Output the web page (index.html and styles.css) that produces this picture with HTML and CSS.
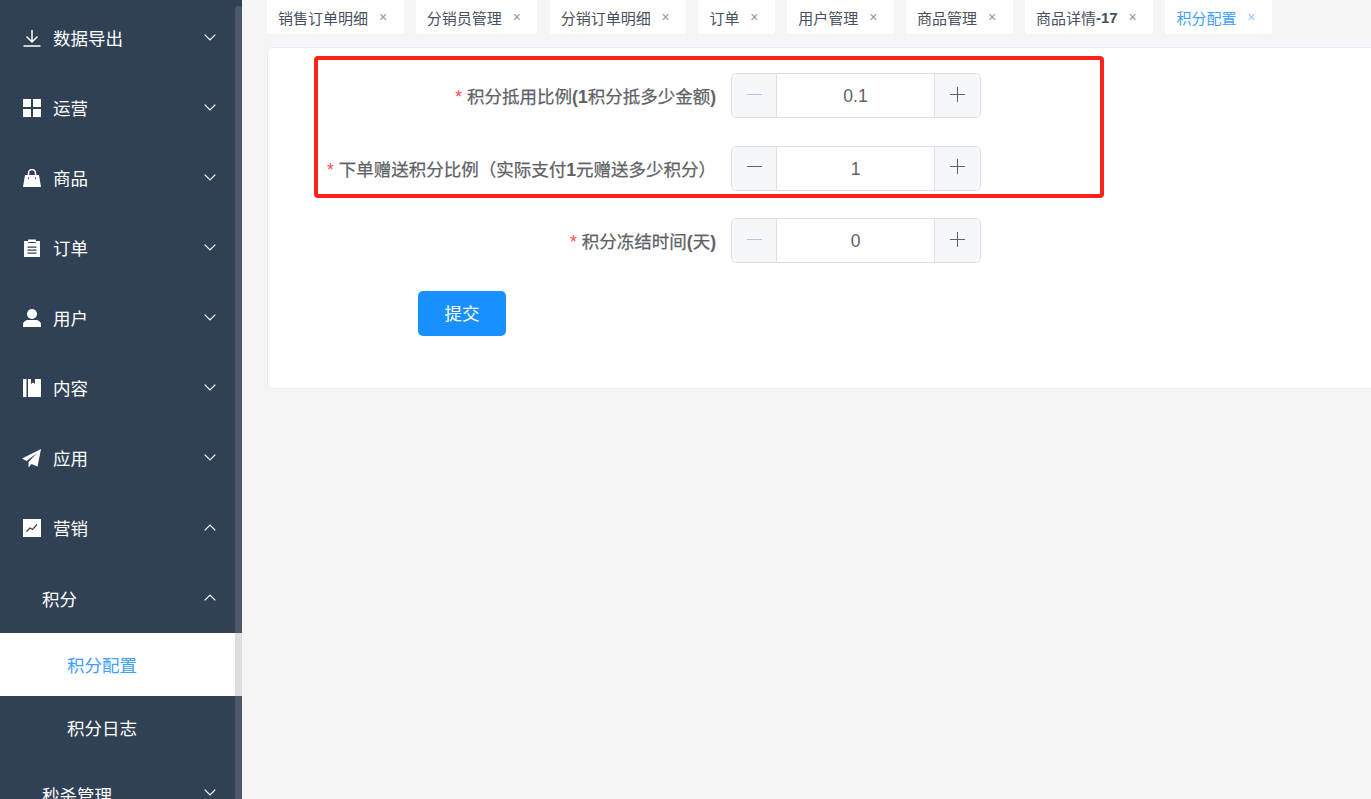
FILE: index.html
```html
<!DOCTYPE html>
<html lang="zh-CN">
<head>
<meta charset="utf-8">
<title>积分配置</title>
<link rel="stylesheet" href="styles.css">
</head>
<body>
<div class="app">
  <aside class="sidebar">
    <nav class="menu">
      <div class="row"><svg class="ico" viewBox="0 0 18 18"><path d="M9 1v12M3.500 7.500L9 13l5.500-5.500M.5 17h17" fill="none" stroke="#fff" stroke-width="1.500"/></svg><span class="label">数据导出</span><svg class="chev" viewBox="0 0 12 7"><path d="M.7.7L6 6l5.300-5.300" fill="none" stroke="#fff" stroke-width="1.200"/></svg></div>
      <div class="row"><svg class="ico" viewBox="0 0 18 18"><path d="M0 0h8v8H0zM10 0h8v8h-8zM0 10h8v8H0zM10 10h8v8h-8z" fill="#fff"/></svg><span class="label">运营</span><svg class="chev" viewBox="0 0 12 7"><path d="M.7.7L6 6l5.300-5.300" fill="none" stroke="#fff" stroke-width="1.200"/></svg></div>
      <div class="row"><svg class="ico" viewBox="0 0 18 18"><path d="M2 6h14l2 12H0z" fill="#fff"/><path d="M5.500 7V4a3.500 3.500 0 0 1 7 0v3" fill="none" stroke="#fff" stroke-width="1.500"/><path d="M5 8.500h1v1.500H5zM12 8.500h1v1.500h-1z" fill="#304156"/></svg><span class="label">商品</span><svg class="chev" viewBox="0 0 12 7"><path d="M.7.7L6 6l5.300-5.300" fill="none" stroke="#fff" stroke-width="1.200"/></svg></div>
      <div class="row"><svg class="ico" viewBox="0 0 18 18"><path d="M1 2h4V.5h8V2h4v16H1z" fill="#fff"/><path d="M4.500 7.500h9v1.200h-9zM4.500 10.500h9v1.200h-9zM4.500 13.500h9v1.200h-9zM5.500 3h7v1h-7z" fill="#304156"/></svg><span class="label">订单</span><svg class="chev" viewBox="0 0 12 7"><path d="M.7.7L6 6l5.300-5.300" fill="none" stroke="#fff" stroke-width="1.200"/></svg></div>
      <div class="row"><svg class="ico" viewBox="0 0 18 18"><circle cx="9" cy="5" r="5" fill="#fff"/><path d="M0 18v-2.500C0 12.500 3 11 5.500 11h7c2.500 0 5.500 1.500 5.500 4.500V18z" fill="#fff"/></svg><span class="label">用户</span><svg class="chev" viewBox="0 0 12 7"><path d="M.7.7L6 6l5.300-5.300" fill="none" stroke="#fff" stroke-width="1.200"/></svg></div>
      <div class="row"><svg class="ico" viewBox="0 0 18 18"><path d="M0 0h3.500v18H0zM5 0h3v5l2-1.500L12 5V0h6v18H5z" fill="#fff"/></svg><span class="label">内容</span><svg class="chev" viewBox="0 0 12 7"><path d="M.7.7L6 6l5.300-5.300" fill="none" stroke="#fff" stroke-width="1.200"/></svg></div>
      <div class="row"><svg class="ico ico-plane" viewBox="0 0 19 19"><path d="M19 0L0 9.500l4.500 2.500L15 4 6.500 13v5.500l3-3.500 6 2.500z" fill="#fff"/></svg><span class="label">应用</span><svg class="chev" viewBox="0 0 12 7"><path d="M.7.7L6 6l5.300-5.300" fill="none" stroke="#fff" stroke-width="1.200"/></svg></div>
      <div class="row"><svg class="ico" viewBox="0 0 18 18"><path d="M0 0h18v18H0z" fill="#fff"/><path d="M3.500 12.500l3.500-3.500 2.500 1.500 4.500-5" fill="none" stroke="#304156" stroke-width="1.200"/></svg><span class="label">营销</span><svg class="chev" viewBox="0 0 12 7"><path d="M.7 6.300L6 1l5.300 5.300" fill="none" stroke="#fff" stroke-width="1.200"/></svg></div>
      <div class="row row-sub"><span class="label">积分</span><svg class="chev" viewBox="0 0 12 7"><path d="M.7 6.300L6 1l5.300 5.300" fill="none" stroke="#fff" stroke-width="1.200"/></svg></div>
      <div class="leaf is-active">积分配置</div>
      <div class="leaf">积分日志</div>
      <div class="row row-sub"><span class="label">秒杀管理</span><svg class="chev" viewBox="0 0 12 7"><path d="M.7.7L6 6l5.300-5.300" fill="none" stroke="#fff" stroke-width="1.200"/></svg></div>
    </nav>
    <div class="scrollbar"></div>
  </aside>
  <main class="main">
    <div class="tabs">
      <div class="tab">销售订单明细<span class="x">×</span></div>
      <div class="tab">分销员管理<span class="x">×</span></div>
      <div class="tab">分销订单明细<span class="x">×</span></div>
      <div class="tab">订单<span class="x">×</span></div>
      <div class="tab">用户管理<span class="x">×</span></div>
      <div class="tab">商品管理<span class="x">×</span></div>
      <div class="tab">商品详情<b>-17</b><span class="x">×</span></div>
      <div class="tab is-active">积分配置<span class="x">×</span></div>
    </div>
    <section class="card">
      <form class="form">
        <div class="item"><label class="item-label"><i>*</i>积分抵用比例<b>(1</b>积分抵多少金额<b>)</b></label>
          <div class="num"><span class="step off"><svg viewBox="0 0 15 15"><path d="M0 7.500h15"/></svg></span><span class="val">0.1</span><span class="step"><svg viewBox="0 0 15 15"><path d="M0 7.500h15M7.500 0v15"/></svg></span></div></div>
        <div class="item"><label class="item-label"><i>*</i>下单赠送积分比例（实际支付<b>1</b>元赠送多少积分）</label>
          <div class="num"><span class="step"><svg viewBox="0 0 15 15"><path d="M0 7.500h15"/></svg></span><span class="val">1</span><span class="step"><svg viewBox="0 0 15 15"><path d="M0 7.500h15M7.500 0v15"/></svg></span></div></div>
        <div class="item"><label class="item-label"><i>*</i>积分冻结时间<b>(</b>天<b>)</b></label>
          <div class="num"><span class="step off"><svg viewBox="0 0 15 15"><path d="M0 7.500h15"/></svg></span><span class="val">0</span><span class="step"><svg viewBox="0 0 15 15"><path d="M0 7.500h15M7.500 0v15"/></svg></span></div></div>
        <button class="submit" type="button">提交</button>
      </form>
    </section>
    <div class="annotation"></div>
  </main>
</div>
</body>
</html>
```

FILE: styles.css
```css
* { box-sizing: border-box; }
html, body { margin: 0; height: 100%; overflow: hidden; }
body {
  font-family: "Liberation Sans", "Noto Sans CJK SC", sans-serif;
  background: #f5f5f5;
  color: #606266;
}
.app { display: flex; height: 799px; width: 1371px; overflow: hidden; }

/* sidebar */
.sidebar {
  position: relative;
  flex: 0 0 242px;
  background: #304156;
  overflow: hidden;
  color: #fff;
  font-size: 17.5px;
}
.menu { padding-top: 4px; }
.row {
  display: flex;
  align-items: center;
  height: 70px;
  padding: 0 26px 0 23px;
}
.row-sub { padding-left: 42px; height: 69px; }
.row-sub:last-child { height: 70px; }
.ico { width: 18px; height: 18px; flex: none; margin-right: 12px; margin-bottom: 2px; }
.ico-plane { width: 19px; height: 19px; margin-left: -1px; }
.label { flex: 1; margin-bottom: 3px; }
.row-sub .label { margin-bottom: 0; }
.chev { width: 12px; height: 7px; flex: none; margin-bottom: 3px; }
.leaf {
  display: flex;
  align-items: center;
  height: 63px;
  padding-left: 67px;
}
.leaf.is-active { background: #fff; color: #409eff; }
.scrollbar {
  position: absolute;
  top: 6px;
  right: 0;
  bottom: 0;
  width: 7px;
  border-radius: 4px 4px 0 0;
  background: rgba(144, 147, 153, .3);
}

/* main */
.main {
  position: relative;
  flex: 1;
  min-width: 0;
  padding-left: 25px;
  overflow: hidden;
}
.tabs { display: flex; gap: 12.3px; height: 34px; }
.tab {
  display: flex;
  align-items: center;
  flex: none;
  height: 34px;
  padding: 0 16px 0 11px;
  background: #fff;
  border-radius: 0 0 3px 3px;
  font-size: 15px;
  white-space: nowrap;
  color: #495060;
}
.tab b { font-weight: 700; }
.tab .x {
  display: block;
  width: 9px;
  margin-left: 10.5px;
  font-size: 14px;
  line-height: 14px;
  text-align: center;
  color: #495060;
  opacity: .6;
}
.tab.is-active, .tab.is-active .x { color: #409eff; }

.card {
  width: 1200px;
  margin-top: 13px;
  padding: 25px 0 52px;
  background: #fff;
  border: 1px solid #e6ebf5;
  border-radius: 5px;
}
.item { display: flex; align-items: center; margin-bottom: 27.5px; }
.item-label {
  flex: 0 0 463px;
  padding-right: 15px;
  text-align: right;
  font-size: 17.5px;
  white-space: nowrap;
  color: #606266;
  -webkit-text-stroke: .25px #606266;
}
.item-label b { -webkit-text-stroke: 0; }
.item-label i {
  font-style: normal;
  color: #ff4949;
  margin-right: 5px;
  -webkit-text-stroke: 0;
}
.num {
  display: flex;
  width: 250px;
  height: 45px;
  border: 1px solid #dcdfe6;
  border-radius: 5px;
  overflow: hidden;
}
.step {
  display: flex;
  align-items: center;
  justify-content: center;
  flex: 0 0 45px;
  padding-bottom: 3px;
  background: #f5f7fa;
}
.step:first-child { border-right: 1px solid #dcdfe6; }
.step:last-child { flex-basis: 46px; border-left: 1px solid #dcdfe6; }
.step svg { width: 15px; height: 15px; fill: none; stroke: #606266; stroke-width: 1; }
.step.off svg { stroke: #c0c4cc; }
.val {
  flex: 1;
  line-height: 45px;
  text-align: center;
  font-size: 17.5px;
  color: #606266;
}
.submit {
  display: block;
  width: 88px;
  height: 45px;
  margin-left: 150px;
  padding: 0 0 2px;
  border: 0;
  border-radius: 5px;
  background: #1890ff;
  color: #fff;
  font: inherit;
  font-size: 17.5px;
}
.annotation {
  position: absolute;
  top: 56px;
  left: 72px;
  width: 790px;
  height: 142px;
  border: 4px solid #ff2218;
  border-radius: 4px;
  pointer-events: none;
}
```
